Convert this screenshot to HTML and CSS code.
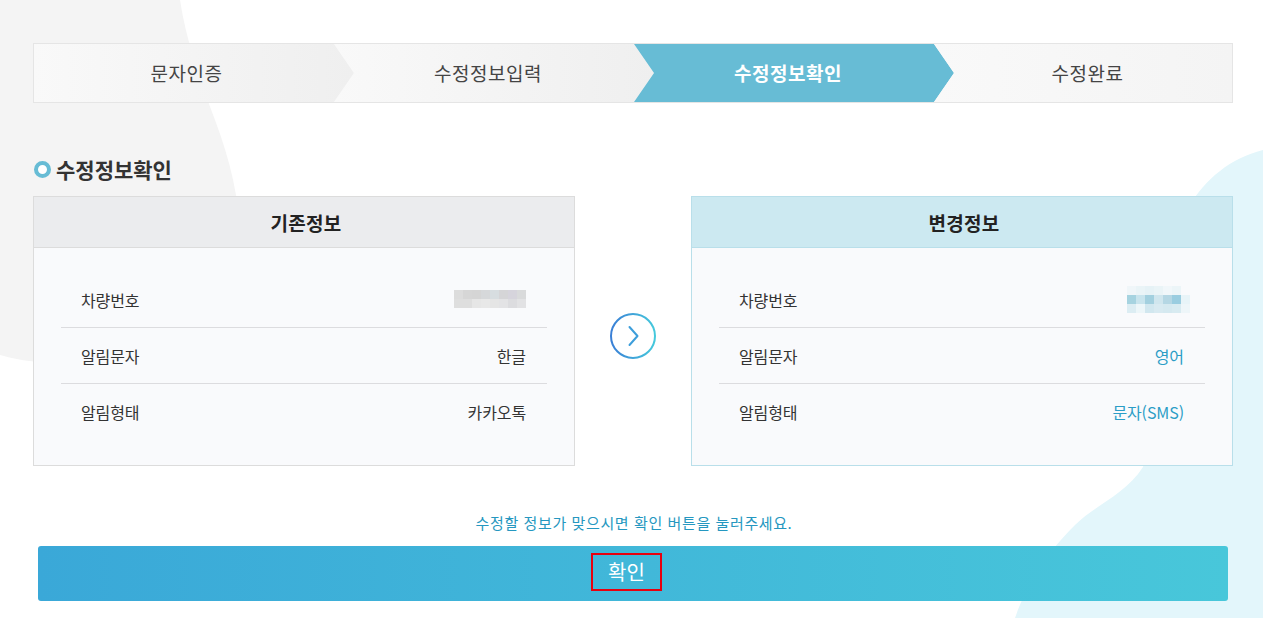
FILE: index.html
```html
<!DOCTYPE html>
<html lang="ko">
<head>
<meta charset="utf-8">
<title>수정정보확인</title>
<link rel="stylesheet" href="styles.css">
</head>
<body>
<div class="page">
  <svg class="bg" width="1263" height="618" viewBox="0 0 1263 618" aria-hidden="true">
    <path fill="#f4f4f4" d="M0 0 H180 C186 40 200 80 215 120 C230 160 240 200 240 240 C240 320 150 365 40 362 C25 361 10 358 0 355 Z"/>
    <path fill="#e3f6fb" d="M1263 150 C1230 158 1205 180 1190 205 C1165 250 1160 420 1143 467 C1125 495 1095 505 1075 525 C1040 560 1025 590 1015 618 L1263 618 Z"/>
  </svg>
  <div class="wrap">
    <ol class="steps">
      <li class="step first">문자인증</li>
      <li class="step">수정정보입력</li>
      <li class="step active">수정정보확인</li>
      <li class="step last">수정완료</li>
    </ol>

    <h2 class="title"><span class="ring"></span>수정정보확인</h2>

    <div class="compare">
      <section class="card">
        <h3 class="card-head">기존정보</h3>
        <div class="card-body">
          <div class="row"><span class="label">차량번호</span>
            <span class="blur blur-gray">
              <i style="background:#dcdcdc"></i><i style="background:#d6d6d6"></i><i style="background:#d5d5d5"></i><i style="background:#d6d8da"></i><i style="background:#d7dde0"></i><i style="background:#d5d5d7"></i><i style="background:#d6d4dc"></i><i style="background:#d9dadb"></i>
              <i style="background:#dedede"></i><i style="background:#dedede"></i><i style="background:#e6e6e6"></i><i style="background:#e8e8e8"></i><i style="background:#e5e5e5"></i><i style="background:#e3e3e5"></i><i style="background:#dcdcdf"></i><i style="background:#e2e2e4"></i>
            </span>
          </div>
          <div class="row"><span class="label">알림문자</span><span class="value">한글</span></div>
          <div class="row"><span class="label">알림형태</span><span class="value">카카오톡</span></div>
        </div>
      </section>

      <div class="arrow">
        <svg width="48" height="48" viewBox="0 0 48 48" aria-hidden="true">
          <defs>
            <linearGradient id="ag" x1="0" y1="0" x2="1" y2="0">
              <stop offset="0" stop-color="#3a7fd6"/>
              <stop offset="1" stop-color="#45c9dc"/>
            </linearGradient>
          </defs>
          <circle cx="24" cy="24" r="22" fill="#fff" stroke="url(#ag)" stroke-width="2"/>
          <path d="M20.5 15 L28.5 24 L20.5 33" fill="none" stroke="#3d9edb" stroke-width="2" stroke-linecap="round" stroke-linejoin="round"/>
        </svg>
      </div>

      <section class="card card-new">
        <h3 class="card-head">변경정보</h3>
        <div class="card-body">
          <div class="row"><span class="label">차량번호</span>
            <span class="blur blur-blue">
              <i style="background:#f0f6f9"></i><i style="background:#eaf4f7"></i><i style="background:#e6f2f6"></i><i style="background:#eaf4f7"></i><i style="background:#f1f7fa"></i><i style="background:#ecf5f8"></i><i style="background:transparent"></i>
              <i style="background:#a6d3e0"></i><i style="background:#c8e4ed"></i><i style="background:#a3d0df"></i><i style="background:#d0e6ee"></i><i style="background:#b5d7e4"></i><i style="background:#9acde0"></i><i style="background:#e8f4f8"></i>
              <i style="background:#dcedf3"></i><i style="background:#ecf6f9"></i><i style="background:#d1e7ef"></i><i style="background:#d8eaf1"></i><i style="background:#d5e9f0"></i><i style="background:#d8ebf1"></i><i style="background:#eef6f9"></i>
            </span>
          </div>
          <div class="row"><span class="label">알림문자</span><span class="value accent">영어</span></div>
          <div class="row"><span class="label">알림형태</span><span class="value accent">문자(SMS)</span></div>
        </div>
      </section>
    </div>

    <p class="notice">수정할 정보가 맞으시면 확인 버튼을 눌러주세요.</p>

    <button class="confirm" type="button"><span class="confirm-label">확인</span></button>
  </div>
</div>
</body>
</html>
```

FILE: styles.css
```css
* { box-sizing: border-box; }

html, body {
  margin: 0;
  padding: 0;
  background: #fff;
}

body {
  font-family: "Noto Sans CJK KR", "Noto Sans", "Liberation Sans", sans-serif;
  color: #333;
}

.page {
  position: relative;
  width: 1263px;
  height: 618px;
  overflow: hidden;
}

.bg {
  position: absolute;
  left: 0;
  top: 0;
  z-index: 0;
}

.wrap {
  position: relative;
  z-index: 1;
  width: 1200px;
  margin-left: 33px;
  padding-top: 43px;
}

/* steps */
.steps {
  display: flex;
  list-style: none;
  margin: 0;
  padding: 0;
  height: 60px;
  border: 1px solid #e5e5e5;
  background: #f4f4f4;
}

.step {
  flex: 0 0 320px;
  margin-right: -20px;
  height: 58px;
  display: flex;
  align-items: center;
  justify-content: center;
  padding: 0 20px 0 8px;
  font-size: 19px;
  line-height: 24px;
  color: #444;
  letter-spacing: 0.5px;
  background: linear-gradient(to right, #f9f9f9, #efefef);
  clip-path: polygon(0 0, calc(100% - 20px) 0, 100% 50%, calc(100% - 20px) 100%, 0 100%, 20px 50%);
}

.step.first {
  padding: 0 20px 0 5px;
  clip-path: polygon(0 0, calc(100% - 20px) 0, 100% 50%, calc(100% - 20px) 100%, 0 100%);
}

.step.last {
  flex: 1 1 auto;
  margin-right: 0;
  padding: 0 0 0 9px;
  clip-path: polygon(0 0, 100% 0, 100% 100%, 0 100%, 20px 50%);
  background: linear-gradient(to right, #f9f9f9, #f4f4f4);
}

.step.active {
  background: #67bcd5;
  color: #fff;
  font-weight: 700;
}

/* title */
.title {
  display: flex;
  align-items: center;
  margin: 54px 0 0 1px;
  height: 24px;
  font-size: 21px;
  line-height: 24px;
  font-weight: 700;
  color: #333;
  letter-spacing: 0;
}

.ring {
  width: 17px;
  height: 17px;
  border: 4px solid #67bcd5;
  border-radius: 50%;
  margin-right: 5px;
  margin-top: 1px;
  background: #fff;
}

/* compare */
.compare {
  display: flex;
  margin-top: 15px;
}

.card {
  flex: 0 0 542px;
  border: 1px solid #dcdcdc;
  background: #f9fafc;
}

.card-head {
  margin: 0;
  height: 51px;
  display: flex;
  align-items: center;
  justify-content: center;
  background: #ebecee;
  border-bottom: 1px solid #dcdcdc;
  font-size: 19px;
  font-weight: 700;
  color: #222;
  letter-spacing: 0.3px;
  padding-left: 4px;
}

.card-new {
  border-color: #b9dfea;
}

.card-new .card-head {
  background: #cce9f1;
  border-bottom-color: #b9dfea;
}

.card-body {
  padding: 24px 27px 26px;
}

.row {
  display: flex;
  align-items: center;
  justify-content: space-between;
  height: 56px;
  padding: 0 21px 0 20px;
  border-bottom: 1px solid #dcdcdf;
  font-size: 16px;
  line-height: 20px;
  letter-spacing: -0.1px;
}

.row:last-child {
  border-bottom: 0;
  height: 55px;
}

.label { color: #333; }
.value { color: #333; }
.value.accent { color: #2b9dc6; }

.blur {
  display: grid;
  grid-auto-rows: 9px;
}

.blur-gray {
  grid-template-columns: repeat(8, 9px);
  margin-top: -2px;
}

.blur-blue {
  grid-template-columns: repeat(7, 9px);
  margin-right: -6px;
}

.blur i { display: block; }

.arrow {
  flex: 1 1 auto;
  display: flex;
  align-items: center;
  justify-content: center;
  padding-top: 9px;
}

.arrow svg { display: block; }

/* notice & button */
.notice {
  margin: 47px 0 0;
  text-align: center;
  font-size: 15px;
  line-height: 20px;
  color: #2597c0;
  letter-spacing: 0.6px;
  padding-left: 2px;
}

.confirm {
  display: flex;
  align-items: center;
  justify-content: center;
  width: 1190px;
  height: 55px;
  margin: 13px 0 0 5px;
  padding: 0;
  border: 0;
  border-radius: 3px;
  background: linear-gradient(to right, #3aa8d8, #48c7da);
  font-family: inherit;
  cursor: pointer;
}

.confirm-label {
  display: flex;
  align-items: center;
  justify-content: center;
  width: 71px;
  height: 38px;
  border: 2px solid #e8000e;
  color: #fff;
  font-size: 20px;
  line-height: 24px;
  margin-left: -13px;
  margin-top: -3px;
}
```
